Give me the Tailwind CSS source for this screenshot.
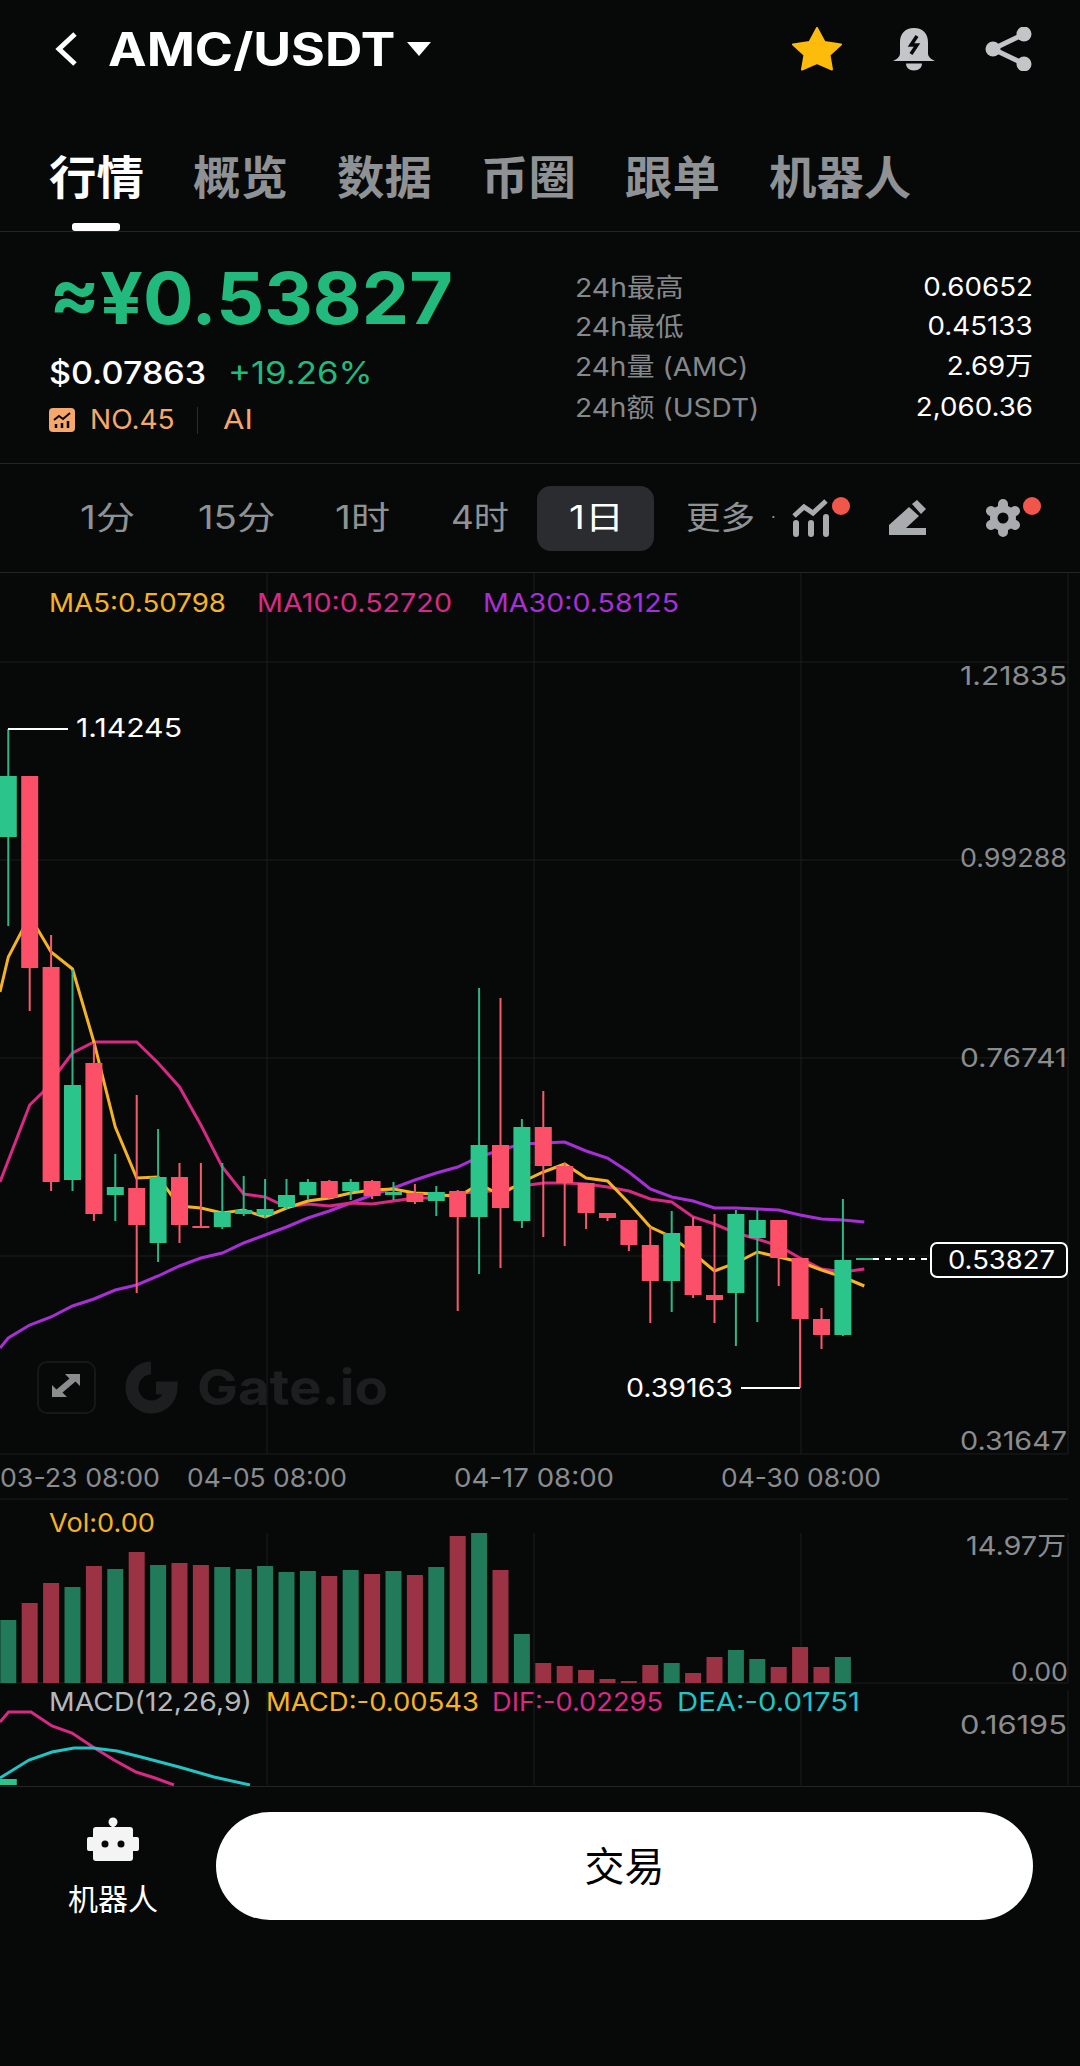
<!DOCTYPE html>
<html lang="zh">
<head>
<meta charset="utf-8">
<script src="https://cdn.jsdelivr.net/npm/@tailwindcss/browser@4"></script>
<title>AMC/USDT</title>
</head>
<body class="bg-[#070909] font-['Inter','Noto_Sans_CJK_SC',sans-serif] text-white">
<div class="w-[1080px] h-[2066px] overflow-hidden flex flex-col bg-[#070909]">

  <header class="h-[98px] flex items-center pl-[52px] pr-[48px]">
    <svg class="w-[27px] h-[36px]" viewBox="0 0 27 36" fill="none"><path d="M23 3 7 18l16 15" stroke="#fff" stroke-width="5"/></svg>
    <span class="ml-[29px] w-[284px] inline-block origin-left scale-x-[1.125] text-[46px] leading-none font-bold whitespace-nowrap">AMC/USDT</span>
    <svg class="ml-[15px] w-[24px] h-[14px]" viewBox="0 0 24 14"><path d="M0 0h24L12 14z" fill="#fff"/></svg>
    <div class="ml-auto flex items-center gap-[49px]">
      <svg class="w-[52px] h-[44px]" viewBox="0 0 52 44"><path d="M26 1 33.500 15 50 17.500 38.500 28 41 42.500 26 36 11 42.500 13.500 28 2 17.500 18.500 15z" fill="#fdbc0c" stroke="#fdbc0c" stroke-width="2" stroke-linejoin="round"/></svg>
      <svg class="w-[44px] h-[44px]" viewBox="0 0 44 44"><path d="M22 1c9 0 14 6 14 14v11c0 4 3 6 7 8H1c4-2 7-4 7-8V15C8 7 13 1 22 1z" fill="#c3c6c9"/><path d="M14 36.500h16c0 4-3 7-8 7s-8-3-8-7z" fill="#c3c6c9"/><path d="M25 9l-6 9h6l-6 9" fill="none" stroke="#070909" stroke-width="3.500"/></svg>
      <svg class="w-[47px] h-[44px]" viewBox="0 0 47 44" fill="#c3c6c9"><path d="M39 7 8 22l31 15" fill="none" stroke="#c3c6c9" stroke-width="5"/><circle cx="8" cy="22" r="7.500"/><circle cx="39" cy="7" r="7.500"/><circle cx="39" cy="37" r="7.500"/></svg>
    </div>
  </header>

  <nav class="relative h-[134px] shrink-0 border-b border-[#222426] pl-[49px] flex items-start pt-[55px] gap-[52px] text-[46px] leading-[48px] font-bold text-[#8f9295]">
    <span class="text-white origin-left scale-x-[1.03]">行情</span>
    <span class="origin-left scale-x-[1.03]">概览</span>
    <span class="origin-left scale-x-[1.03]">数据</span>
    <span class="origin-left scale-x-[1.03]">币圈</span>
    <span class="origin-left scale-x-[1.03]">跟单</span>
    <span class="origin-left scale-x-[1.03]">机器人</span>
    <span class="absolute left-[72px] bottom-0 w-[48px] h-[8px] rounded-[3px] bg-white"></span>
  </nav>

  <section class="h-[232px] shrink-0 border-b border-[#222426] flex pl-[49px] pr-[47px]">
    <div class="w-[526px] shrink-0">
      <div class="mt-[30px] origin-left scale-x-[1.045] text-[72px] leading-[72px] font-bold text-[#22b97d] whitespace-nowrap">≈¥0.53827</div>
      <div class="mt-[19px] flex items-center text-[31px] leading-[40px] font-medium">
        <span class="w-[181px] origin-left scale-x-[1.1]">$0.07863</span>
        <span class="-ml-[2px] origin-left scale-x-[1.12] font-normal text-[#22b97d]">+19.26%</span>
      </div>
      <div class="mt-[11px] flex items-center text-[27px] leading-[32px] text-[#f5a76c]">
        <svg class="w-[26px] h-[24px]" viewBox="0 0 26 24"><rect width="26" height="24" rx="4" fill="#f5a76c"/><path d="M5 12 10 8l4 3 7-6" fill="none" stroke="#070909" stroke-width="2"/><path d="M7 16v4M13 15v5M19 13v7" stroke="#070909" stroke-width="2.500"/></svg>
        <span class="ml-[15px] origin-left scale-x-[1.04]">NO.45</span>
        <span class="ml-[26px] w-[1px] h-[27px] bg-[#2a2c2e]"></span>
        <span class="ml-[25px] origin-left scale-x-[1.15]">AI</span>
      </div>
    </div>
    <dl class="flex-1 pt-[36px] text-[26px] leading-[40px]">
      <div class="flex justify-between h-[39px]"><dt class="origin-left scale-x-[1.09] text-[#85888b]">24h最高</dt><dd class="origin-right scale-x-[1.065] -mt-[1px]">0.60652</dd></div>
      <div class="flex justify-between h-[40px]"><dt class="origin-left scale-x-[1.09] text-[#85888b]">24h最低</dt><dd class="origin-right scale-x-[1.065] -mt-[1px]">0.45133</dd></div>
      <div class="flex justify-between h-[41px]"><dt class="origin-left scale-x-[1.08] text-[#85888b]">24h量 (AMC)</dt><dd class="origin-right scale-x-[1.065] -mt-[1px]">2.69万</dd></div>
      <div class="flex justify-between h-[41px]"><dt class="origin-left scale-x-[1.08] text-[#85888b]">24h额 (USDT)</dt><dd class="origin-right scale-x-[1.065] -mt-[1px]">2,060.36</dd></div>
    </dl>
  </section>

  <div class="h-[109px] shrink-0 border-b border-[#222426] flex items-center pl-[80px] text-[32px] text-[#8f9295]">
    <span class="w-[118px]"><span class="inline-block origin-left scale-x-[1.22]">1分</span></span>
    <span class="w-[137px]"><span class="inline-block origin-left scale-x-[1.2]">15分</span></span>
    <span class="w-[116px]"><span class="inline-block origin-left scale-x-[1.22]">1时</span></span>
    <span class="w-[86px]"><span class="inline-block origin-left scale-x-[1.1]">4时</span></span>
    <span class="w-[117px] h-[65px] rounded-[14px] bg-[#2a2c30] text-white flex items-center justify-center"><span class="inline-block scale-x-[1.22] ml-[2px]">1日</span></span>
    <span class="ml-[32px] w-[64px] origin-left scale-x-[1.08] whitespace-nowrap">更多</span>
    <span class="ml-[21px] mb-[2px] text-[16px] leading-none">·</span>
    <svg class="ml-[16px] w-[60px] h-[44px]" viewBox="0 0 60 44"><path d="M2 20 12 11l9 6L34 5" fill="none" stroke="#a9acae" stroke-width="5"/><path d="M4 27v11M19 27v11M34 21v17" stroke="#a9acae" stroke-width="6" stroke-linecap="round"/><circle cx="49" cy="10" r="9" fill="#f0574a"/></svg>
    <svg class="ml-[36px] w-[38px] h-[36px]" viewBox="0 0 38 36"><path d="M1 25 21 7l10 9-13 12h20v7H1z" fill="#a9acae"/><path d="M24 4l5-4 9 9-5 5z" fill="#a9acae"/></svg>
    <svg class="ml-[58px] w-[58px] h-[44px]" viewBox="0 0 58 44"><path d="M19 22V8M19 22l12 7M19 22l12-7M19 22v14M19 22 7 29M19 22 7 15" stroke="#a9acae" stroke-width="10" stroke-linecap="round"/><circle cx="19" cy="22" r="13" fill="#a9acae"/><circle cx="19" cy="22" r="5.500" fill="#070909"/><circle cx="48" cy="10" r="9" fill="#f0574a"/></svg>
  </div>

  <svg class="w-[1080px] h-[1213px] shrink-0 block" viewBox="0 573 1080 1213" font-size="26" fill="#8a8c8e">
    <path d="M267 573V1454M534 573V1454M801 573V1454M1068 573V1454M267 1533V1683M534 1533V1683M801 1533V1683M1068 1533V1683M267 1690V1785M534 1690V1785M801 1690V1785M1068 1690V1785M0 662H1068M0 860H1068M0 1058H1068M0 1256H1068M0 1454H1068M0 1499H1068M0 1683H1068" stroke="#1c1e1f" stroke-width="1" fill="none"/>

    <!-- watermark -->
    <rect x="38" y="1362" width="57" height="51" rx="9" fill="none" stroke="#151718" stroke-width="2"/>
    <path d="M80 1374v12l-4.500-4.500-13 11 4.500 4.500H52v-12l4.500 4.500 13-11-4.500-4.500z" fill="#8a8c8e"/>
    <path d="M151 1368a19.500 19.500 0 1 0 20 20h-15" fill="none" stroke="#1c1e1f" stroke-width="13"/>
    <text x="197" y="1405" font-size="50" font-weight="700" fill="#1c1e1f" textLength="191" lengthAdjust="spacingAndGlyphs">Gate.io</text>

    <!-- moving averages -->
    <polyline fill="none" stroke="#a82fd6" stroke-width="3" points="0,1348 8.300,1338 29.700,1325 51.100,1317 72.500,1306 93.900,1299 115.300,1290 136.700,1285 158.100,1276 179.500,1266 200.900,1258 222.300,1253 243.700,1243 265.100,1235 286.500,1227 307.900,1218 329.300,1211 350.700,1203 372.100,1195 393.500,1188 414.900,1180 436.300,1173 457.700,1167 479.100,1157 500.500,1150 521.900,1144 543.300,1143 564.700,1142 586.100,1151 607.500,1158 628.900,1172 650.300,1189 671.700,1197 693.100,1201 714.500,1208 735.900,1208 757.300,1209 778.700,1210 800.100,1215 821.500,1219 842.900,1220 864.300,1222"/>
    <polyline fill="none" stroke="#d82a84" stroke-width="3" points="0,1182 29.700,1105 43,1092 72.500,1053 93.900,1042 115.300,1042 136.700,1042 158.100,1063 179.500,1087 200.900,1125 222.300,1167 243.700,1194 265.100,1197 286.500,1207 307.900,1204 329.300,1206 350.700,1203 372.100,1204 393.500,1201 414.900,1198 436.300,1198 457.700,1193 479.100,1192 500.500,1190 521.900,1186 543.300,1183 564.700,1183 586.100,1184 607.500,1187 628.900,1191 650.300,1199 671.700,1202 693.100,1217 714.500,1224 735.900,1233 757.300,1239 778.700,1246 800.100,1258 821.500,1269 842.900,1272 864.300,1269"/>
    <polyline fill="none" stroke="#f5b324" stroke-width="3" points="0,992 8.300,957 29.700,916 51.100,952 72.500,969 93.900,1042 115.300,1127 136.700,1178 158.100,1177 179.500,1206 200.900,1208 222.300,1213 243.700,1210 265.100,1217 286.500,1208 307.900,1201 329.300,1198 350.700,1193 372.100,1190 393.500,1189 414.900,1193 436.300,1194 457.700,1197 479.100,1184 500.500,1195 521.900,1182 543.300,1172 564.700,1164 586.100,1178 607.500,1181 628.900,1203 650.300,1227 671.700,1237 693.100,1253 714.500,1271 735.900,1263 757.300,1252 778.700,1257 800.100,1262 821.500,1270 842.900,1277 864.300,1286"/>

    <!-- candle wicks -->
    <path fill="none" stroke="#2db788" stroke-width="2" d="M8.300 729V926M72.500 970V1191M115.300 1154V1221M158.100 1129V1262M222.300 1163V1229M243.700 1176V1216M265.100 1179V1218M286.500 1179V1209M307.900 1179V1200M350.700 1179V1200M393.500 1182V1200M436.300 1186V1216M479.100 988V1274M521.900 1119V1228M671.700 1211V1312M735.900 1210V1346M757.300 1210V1322M842.900 1199V1336M856 1259H873"/>
    <path fill="none" stroke="#f75a6e" stroke-width="2" d="M29.700 776V1011M51.100 935V1191M93.900 1043V1221M136.700 1095V1293M179.500 1163V1243M200.900 1163V1228M329.300 1180V1199M372.100 1180V1199M414.900 1184V1204M457.700 1190V1311M500.500 998V1268M543.300 1091V1237M564.700 1163V1246M586.100 1183V1229M607.500 1213V1221M628.900 1220V1251M650.300 1227V1323M693.100 1217V1298M714.500 1214V1323M778.700 1220V1286M800.100 1258V1388M821.500 1308V1349"/>
    <!-- candle bodies -->
    <path fill="none" stroke="#2bc48a" stroke-width="17" d="M8.300 776V837M72.500 1085V1180M115.300 1187V1195M158.100 1177V1243M222.300 1212V1227M243.700 1210V1214M265.100 1209V1215M286.500 1195V1207M307.900 1182V1195M350.700 1182V1191M393.500 1192V1195M436.300 1192V1201M479.100 1145V1217M521.900 1127V1221M671.700 1233V1281M735.900 1214V1293M757.300 1220V1238M842.900 1260V1335"/>
    <path fill="none" stroke="#fb5068" stroke-width="17" d="M29.700 776V968M51.100 967V1182M93.900 1063V1214M136.700 1188V1225M179.500 1177V1225M200.900 1226V1228M329.300 1181V1198M372.100 1181V1196M414.900 1193V1202M457.700 1191V1217M500.500 1145V1208M543.300 1127V1166M564.700 1166V1183M586.100 1183V1213M607.500 1213V1218M628.900 1220V1245M650.300 1245V1281M693.100 1226V1295M714.500 1295V1300M778.700 1220V1258M800.100 1258V1319M821.500 1319V1335"/>

    <!-- annotations -->
    <path d="M8 729H68M741 1388H800" stroke="#fff" stroke-width="2" fill="none"/>
    <path d="M873 1259H928" stroke="#fff" stroke-width="2" stroke-dasharray="6 6" fill="none"/>
    <text x="76" y="737" fill="#fff" textLength="106" lengthAdjust="spacingAndGlyphs">1.14245</text>
    <text x="626" y="1397" fill="#fff" textLength="107" lengthAdjust="spacingAndGlyphs">0.39163</text>
    <rect x="931" y="1243" width="136" height="34" rx="6" fill="#070909" stroke="#fff" stroke-width="2"/>
    <text x="948" y="1269" fill="#fff" textLength="107" lengthAdjust="spacingAndGlyphs">0.53827</text>

    <!-- legend -->
    <text x="49" y="612" fill="#f5b324" textLength="177" lengthAdjust="spacingAndGlyphs">MA5:0.50798</text>
    <text x="257" y="612" fill="#d82a84" textLength="195" lengthAdjust="spacingAndGlyphs">MA10:0.52720</text>
    <text x="483" y="612" fill="#a82fd6" textLength="196" lengthAdjust="spacingAndGlyphs">MA30:0.58125</text>

    <!-- axis -->
    <text x="960" y="685" textLength="107" lengthAdjust="spacingAndGlyphs">1.21835</text>
    <text x="960" y="867" textLength="107" lengthAdjust="spacingAndGlyphs">0.99288</text>
    <text x="960" y="1067" textLength="107" lengthAdjust="spacingAndGlyphs">0.76741</text>
    <text x="960" y="1450" textLength="107" lengthAdjust="spacingAndGlyphs">0.31647</text>
    <text x="966" y="1555" textLength="100" lengthAdjust="spacingAndGlyphs">14.97万</text>
    <text x="1011" y="1681" textLength="57" lengthAdjust="spacingAndGlyphs">0.00</text>
    <text x="960" y="1734" textLength="107" lengthAdjust="spacingAndGlyphs">0.16195</text>
    <text x="0" y="1487" textLength="160" lengthAdjust="spacingAndGlyphs">03-23 08:00</text>
    <text x="187" y="1487" textLength="160" lengthAdjust="spacingAndGlyphs">04-05 08:00</text>
    <text x="454" y="1487" textLength="160" lengthAdjust="spacingAndGlyphs">04-17 08:00</text>
    <text x="721" y="1487" textLength="160" lengthAdjust="spacingAndGlyphs">04-30 08:00</text>

    <!-- volume -->
    <text x="49" y="1532" fill="#f5b324" textLength="106" lengthAdjust="spacingAndGlyphs">Vol:0.00</text>
    <path fill="none" stroke="#217a59" stroke-width="16" d="M8.300 1620V1683M72.500 1587V1683M115.300 1569V1683M158.100 1565V1683M222.300 1567V1683M243.700 1569V1683M265.100 1566V1683M286.500 1572V1683M307.900 1571V1683M350.700 1570V1683M393.500 1571V1683M436.300 1567V1683M479.100 1533V1683M521.900 1634V1683M671.700 1663V1683M735.900 1650V1683M757.300 1659V1683M842.900 1657V1683"/>
    <path fill="none" stroke="#9c3344" stroke-width="16" d="M29.700 1603V1683M51.100 1583V1683M93.900 1566V1683M136.700 1552V1683M179.500 1563V1683M200.900 1565V1683M329.300 1576V1683M372.100 1574V1683M414.900 1575V1683M457.700 1536V1683M500.500 1570V1683M543.300 1663V1683M564.700 1666V1683M586.100 1670V1683M607.500 1679V1683M628.900 1681V1683M650.300 1665V1683M693.100 1673V1683M714.500 1657V1683M778.700 1667V1683M800.100 1647V1683M821.500 1667V1683"/>

    <!-- macd -->
    <text x="49" y="1711" fill="#b5b7b9" textLength="203" lengthAdjust="spacingAndGlyphs">MACD(12,26,9)</text>
    <text x="266" y="1711" fill="#f5b324" textLength="213" lengthAdjust="spacingAndGlyphs">MACD:-0.00543</text>
    <text x="492" y="1711" fill="#d82a84" textLength="171" lengthAdjust="spacingAndGlyphs">DIF:-0.02295</text>
    <text x="677" y="1711" fill="#22c4c4" textLength="183" lengthAdjust="spacingAndGlyphs">DEA:-0.01751</text>
    <path d="M8.300 1779V1785" stroke="#2bc48a" stroke-width="17" fill="none"/>
    <polyline fill="none" stroke="#d82a84" stroke-width="3" points="0,1722 8.600,1712 31,1712 52,1726 72,1733 93,1747 114,1760 136,1772 155,1778 174,1785"/>
    <polyline fill="none" stroke="#22c4c4" stroke-width="3" points="0,1778 29,1760 52,1752 74,1748 93,1748 117,1751 141,1757 179,1767 214,1777 250,1785"/>
  </svg>

  <footer class="border-t border-[#222426] flex items-start pt-[25px] pl-[53px] pr-[47px]">
    <div class="w-[120px] flex flex-col items-center pt-[5px]">
      <svg class="w-[52px] h-[44px]" viewBox="0 0 52 44" fill="#f4f4f4"><circle cx="26" cy="5" r="4.500"/><rect x="24.500" y="6" width="3" height="5"/><rect x="6" y="10" width="40" height="34" rx="3"/><rect x="0" y="20" width="52" height="14" rx="2"/><circle cx="18" cy="27" r="3.500" fill="#070909"/><circle cx="34" cy="27" r="3.500" fill="#070909"/></svg>
      <span class="mt-[19px] text-[30px] leading-[38px] whitespace-nowrap">机器人</span>
    </div>
    <button class="ml-[43px] w-[817px] h-[108px] rounded-[54px] bg-white text-black text-[40px] font-normal flex items-center justify-center pt-[2px]">交易</button>
  </footer>
</div>
</body>
</html>
